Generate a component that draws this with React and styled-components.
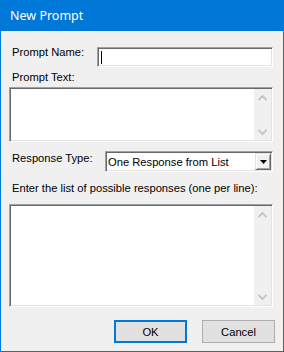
import React from 'react';
import styled, { createGlobalStyle } from 'styled-components';

const Global = createGlobalStyle`
  html, body { margin: 0; padding: 0; background: #f0f0f0; }
  body {
    font-family: "Liberation Sans", Arial, sans-serif;
    font-size: 11.2px;
    color: #000;
  }
`;

const Window = styled.div`
  width: 284px;
  height: 352px;
  box-sizing: border-box;
  border: 1px solid #0078d7;
  border-top: none;
  background: #f0f0f0;
  display: flex;
  flex-direction: column;
`;

const TitleBar = styled.div`
  height: 31px;
  flex: none;
  background: #0078d7;
  color: #fff;
  font-family: "Noto Sans", "Open Sans", sans-serif;
  font-size: 12.5px;
  display: flex;
  align-items: center;
  padding-left: 9px;
`;

const Body = styled.div`
  display: flex;
  flex-direction: column;
  padding: 16px 10px 0 8px;
`;

const Row = styled.div`
  display: flex;
  align-items: flex-start;
  margin-top: ${p => p.$top || 0}px;
`;

const Label = styled.div`
  width: ${p => p.$width}px;
  margin-left: 3px;
  margin-top: ${p => p.$top || 0}px;
  line-height: 13px;
  white-space: nowrap;
  flex: none;
`;

const Caption = styled.div`
  margin-left: 3px;
  margin-top: ${p => p.$top || 0}px;
  line-height: 13px;
  white-space: nowrap;
`;

const Sunken = styled.div`
  box-sizing: border-box;
  padding: 1px;
  border: 1px solid;
  border-color: #a0a0a0 #ffffff #ffffff #a0a0a0;
  box-shadow: inset 1px 1px 0 #696969, inset -1px -1px 0 #e3e3e3;
  background: #fff;
`;

const TextField = styled(Sunken)`
  width: ${p => p.$width}px;
  height: ${p => p.$height}px;
  display: flex;
  align-items: center;
  padding-left: 3px;
`;

const Caret = styled.span`
  width: 1px;
  height: 13px;
  background: #000;
`;

const TextArea = styled(Sunken)`
  height: ${p => p.$height}px;
  margin-top: ${p => p.$top || 0}px;
  display: flex;
  justify-content: flex-end;
`;

const ScrollBar = styled.div`
  width: 17px;
  background: #f0f0f0;
  display: flex;
  flex-direction: column;
  justify-content: space-between;
`;

const ArrowBox = styled.div`
  height: 17px;
  display: flex;
  align-items: center;
  justify-content: center;
`;

const Combo = styled(Sunken)`
  width: ${p => p.$width}px;
  height: 21px;
  display: flex;
  align-items: stretch;
`;

const ComboText = styled.div`
  flex: 1;
  padding-left: 1px;
  display: flex;
  align-items: center;
  white-space: nowrap;
`;

const DropButton = styled.div`
  width: 16px;
  box-sizing: border-box;
  border: 1px solid;
  border-color: #e3e3e3 #696969 #696969 #e3e3e3;
  box-shadow: inset 1px 1px 0 #ffffff, inset -1px -1px 0 #a0a0a0;
  background: #f0f0f0;
  display: flex;
  align-items: center;
  justify-content: center;
`;

const ButtonRow = styled.div`
  display: flex;
  justify-content: flex-end;
  gap: 15px;
  margin-top: 13px;
  margin-right: -2px;
`;

const Button = styled.div`
  width: 73px;
  height: 23px;
  box-sizing: border-box;
  background: #e1e1e1;
  border: ${p => (p.$default ? '2px solid #0078d7' : '1px solid #adadad')};
  display: flex;
  align-items: center;
  justify-content: center;
`;

const Chevron = ({ up }) => (
  <svg width="9" height="6" viewBox="0 0 9 6">
    <polyline
      points={up ? '0.5,5 4.5,1 8.5,5' : '0.5,1 4.5,5 8.5,1'}
      fill="none"
      stroke="#c2c2c2"
      strokeWidth="1.8"
    />
  </svg>
);

const DisabledScroll = () => (
  <ScrollBar>
    <ArrowBox><Chevron up /></ArrowBox>
    <ArrowBox><Chevron /></ArrowBox>
  </ScrollBar>
);

export default function App() {
  return (
    <>
      <Global />
      <Window>
        <TitleBar>New Prompt</TitleBar>
        <Body>
          <Row>
            <Label $width={85} $top={-1}>Prompt Name:</Label>
            <TextField $width={176} $height={20}><Caret /></TextField>
          </Row>
          <Caption $top={4}>Prompt Text:</Caption>
          <TextArea $height={55} $top={3}><DisabledScroll /></TextArea>
          <Row $top={9}>
            <Label $width={93} $top={1}>Response Type:</Label>
            <Combo $width={168}>
              <ComboText>One Response from List</ComboText>
              <DropButton>
                <svg width="7" height="4" viewBox="0 0 7 4">
                  <polygon points="0,0 7,0 3.5,4" fill="#000" />
                </svg>
              </DropButton>
            </Combo>
          </Row>
          <Caption $top={10}>Enter the list of possible responses (one per line):</Caption>
          <TextArea $height={103} $top={9}><DisabledScroll /></TextArea>
          <ButtonRow>
            <Button $default>OK</Button>
            <Button>Cancel</Button>
          </ButtonRow>
        </Body>
      </Window>
    </>
  );
}
